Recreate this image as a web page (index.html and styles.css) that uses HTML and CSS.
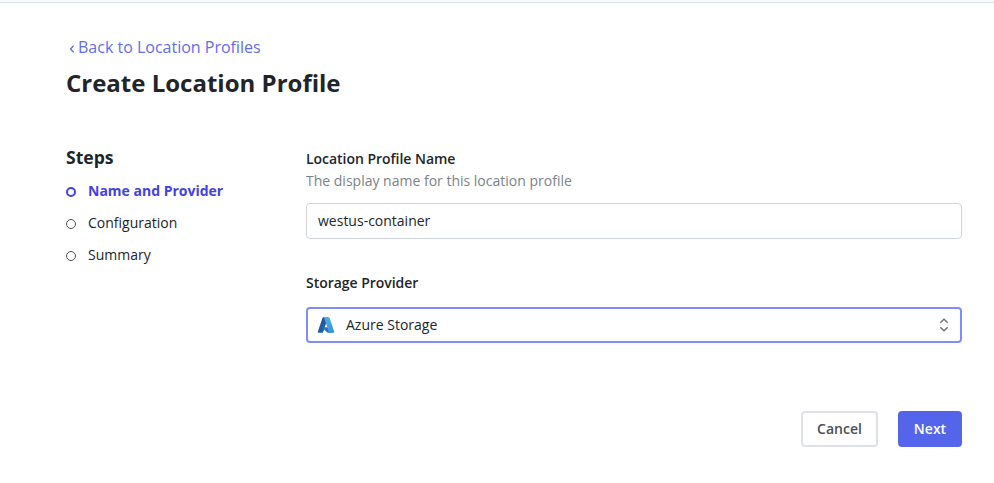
FILE: index.html
```html
<!DOCTYPE html>
<html lang="en">
<head>
<meta charset="utf-8">
<title>Create Location Profile</title>
<link rel="stylesheet" href="styles.css">
</head>
<body>
<div class="topbar"></div>
<main class="page">
  <a class="back"><svg class="chevron" viewBox="0 0 6 8"><path d="M4.600 .8 1.500 4l3.100 3.200"/></svg><span>Back to Location Profiles</span></a>
  <h1>Create Location Profile</h1>
  <div class="content">
    <nav class="steps">
      <h2>Steps</h2>
      <ol>
        <li class="active"><i class="dot"></i><span>Name and Provider</span></li>
        <li><i class="dot"></i><span>Configuration</span></li>
        <li><i class="dot"></i><span>Summary</span></li>
      </ol>
    </nav>
    <form class="form">
      <div class="label">Location Profile Name</div>
      <div class="hint">The display name for this location profile</div>
      <div class="field"><span>westus-container</span></div>
      <div class="label provider">Storage Provider</div>
      <div class="field select">
        <svg class="azure" viewBox="0 0 96 96">
          <defs><linearGradient id="a" x1="0" y1="1" x2=".6" y2="0"><stop offset="0" stop-color="#1b62b4"/><stop offset="1" stop-color="#245591"/></linearGradient>
          <linearGradient id="b" x1="0" y1="0" x2="1" y2="1"><stop offset="0" stop-color="#52b5ea"/><stop offset="1" stop-color="#388dd8"/></linearGradient></defs>
          <path fill="url(#a)" d="M33.300 6.500h26L32.300 86.500a4.200 4.200 0 0 1-3.900 2.800H8.100a4.100 4.100 0 0 1-3.900-5.500L29.400 9.300a4.200 4.200 0 0 1 3.900-2.800z"/>
          <path fill="#2a72c4" d="M71.200 60.300H29.900a1.900 1.900 0 0 0-1.300 3.300l26.500 24.800a4.200 4.200 0 0 0 2.800 1.100h23.400z"/>
          <path fill="url(#b)" d="M66.600 9.400a4.100 4.100 0 0 0-3.900-2.800h-29a4.200 4.200 0 0 1 3.900 2.800l25.200 74.500a4.100 4.100 0 0 1-3.900 5.500h29a4.100 4.100 0 0 0 3.900-5.500z"/>
        </svg>
        <span>Azure Storage</span>
        <svg class="sort" viewBox="0 0 10 14"><path d="M1.300 4.800 5 1.200l3.700 3.600M1.300 9.200 5 12.800l3.700-3.600"/></svg>
      </div>
      <div class="actions">
        <button type="button" class="cancel">Cancel</button>
        <button type="button" class="next">Next</button>
      </div>
    </form>
  </div>
</main>
</body>
</html>
```
FILE: styles.css
```css
* { box-sizing: border-box; }
body { margin: 0; font: 14px/20px "Open Sans", sans-serif; color: #212529; background: #fff; }
.topbar { height: 3px; background: #f8f9fa; border-bottom: 1px solid #dee2e6; }
.page { height: 480px; padding: 33px 32px 0 66px; }
.back { display: flex; align-items: center; height: 22px; padding-left: 3px; font-size: 16px; color: #5f6dee; }
.chevron { width: 6px; height: 8px; margin: 3px 3px 0 0; fill: none; stroke: currentColor; stroke-width: 1.3; }
h1 { margin: 8px 0 0; font-size: 24px; line-height: 34px; font-weight: 700; }
.content { display: flex; margin-top: 45px; }
.steps { width: 240px; }
h2 { margin: 0; font-size: 17.6px; line-height: 24px; font-weight: 700; }
ol { list-style: none; margin: 6px 0 0; padding: 0; }
li { display: flex; align-items: center; height: 32px; gap: 12px; }
.dot { width: 10px; height: 10px; margin-top: 1px; border: 1px solid #495057; border-radius: 50%; }
.active { color: #4141ea; font-weight: 700; }
.active .dot { border: 2px solid #4141ea; }
.form { flex: 1; padding-top: 4px; }
.label { font-weight: 600; letter-spacing: -.03px; }
.hint { margin-top: 2px; color: #7b8289; }
.field { display: flex; align-items: center; height: 36px; margin-top: 12px; padding: 0 11px; border: 1px solid #ced4da; border-radius: 4px; }
.provider { margin-top: 34px; }
.select { margin-top: 14px; padding: 0 11px 0 9px; border: 2px solid #7f8df5; }
.azure { width: 18px; height: 18px; margin-right: 11px; }
.sort { width: 10px; height: 14px; margin-left: auto; fill: none; stroke: #6c7278; stroke-width: 1.4; }
.actions { display: flex; justify-content: flex-end; gap: 20px; margin-top: 68px; }
button { height: 36px; padding: 0; border-radius: 4px; font: 600 14px/20px "Open Sans", sans-serif; }
.cancel { width: 77px; border: 2px solid #dee2e6; background: #fff; color: #495057; }
.next { width: 64px; border: 0; background: #5465ec; color: #fff; }
```
